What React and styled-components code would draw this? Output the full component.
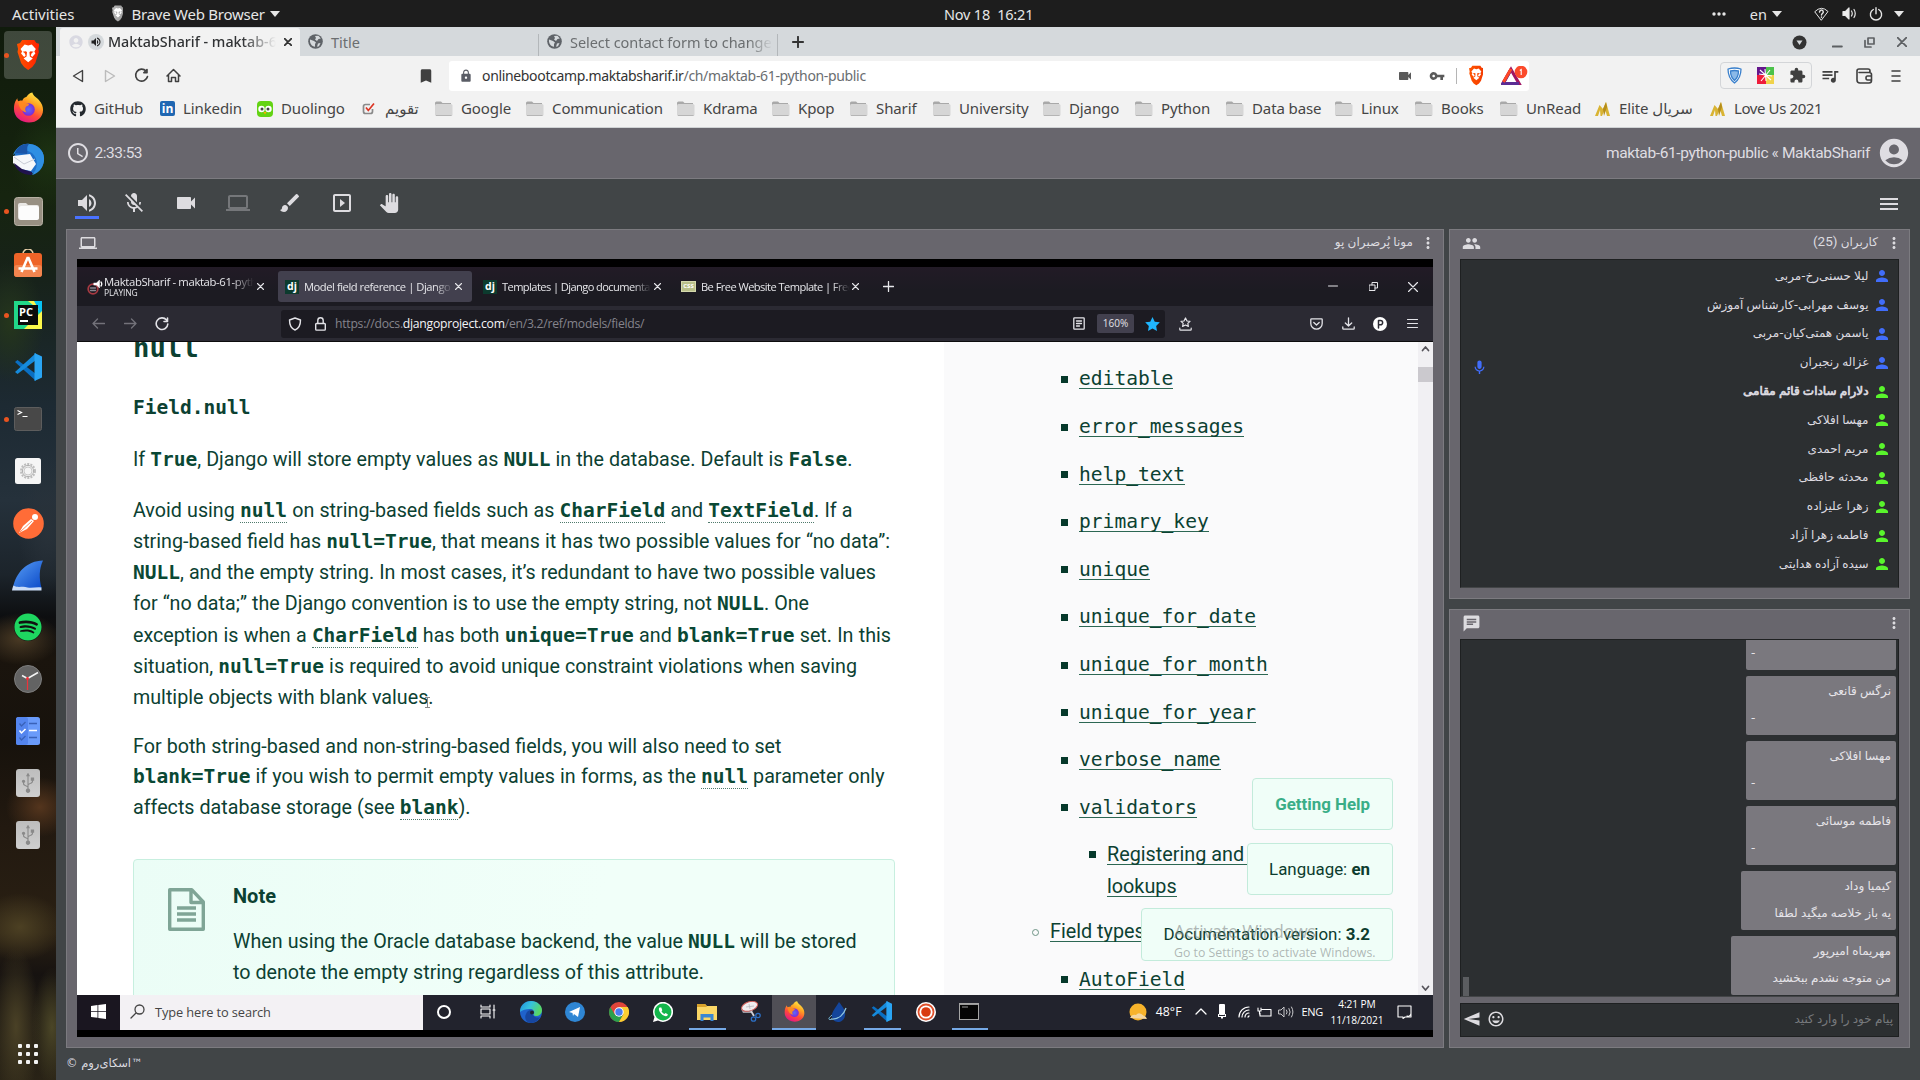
import React from 'react';
import styled, { createGlobalStyle, css } from 'styled-components';
import {
  MdVolumeUp, MdMicOff, MdVideocam, MdLaptop, MdBrush, MdSlideshow, MdPanTool, MdMenu, MdMoreVert,
  MdPeople, MdPerson, MdMic, MdChat, MdSend, MdInsertEmoticon, MdAccountCircle, MdAccessTime,
  MdLock, MdVpnKey, MdExtension, MdQueueMusic, MdBookmark,
} from 'react-icons/md';
import { FaGithub, FaSpotify, FaUsb } from 'react-icons/fa';

const Global = createGlobalStyle`
  * { box-sizing: border-box; }
  html, body { margin: 0; padding: 0; background: #414547; overflow: hidden; }
  svg { display: block; flex: none; }
`;

const ui = `"Noto Sans", "DejaVu Sans", sans-serif`;
const fa = `"Roboto", "DejaVu Sans", sans-serif`;
const mono = `"DejaVu Sans Mono", "Liberation Mono", monospace`;

const Screen = styled.div`
  width: 1920px; height: 1080px; display: flex; flex-direction: column; overflow: hidden;
  font-family: ${ui}; background: #414547;
`;

/* generic row pieces */
const Slot = styled.div`
  width: ${p => p.$w}px; margin-left: ${p => p.$ml || 0}px; flex: none; display: flex;
  align-items: center; justify-content: center; color: ${p => p.$c || 'inherit'};
`;
const Label = styled.span`
  margin-left: ${p => p.$ml || 0}px; width: ${p => (p.$w ? `${p.$w}px` : 'auto')}; flex: none;
  white-space: pre; overflow: ${p => (p.$fade ? 'hidden' : 'visible')};
  font-size: ${p => p.$s || 15}px; letter-spacing: ${p => p.$ls || 0}px;
  font-weight: ${p => p.$b || 400}; color: ${p => p.$c || 'inherit'};
  ${p => p.$fade && css`mask-image: linear-gradient(to right, #000 ${p.$fade}%, transparent 100%);`}
`;
const Grow = styled.div`flex: 1;`;

/* ---------- top bar ---------- */
const TopBar = styled.header`
  height: 27px; flex: none; background: #1d1d1d; color: #e6e6e6; display: flex; align-items: center;
  font-size: 15px;
`;
const TopLeft = styled.div`width: 944px; flex: none; display: flex; align-items: center;`;
const Caret = styled.i`
  width: 0; height: 0; border: 5px solid transparent; border-top: 6px solid #e6e6e6; border-bottom: 0;
  margin-left: ${p => p.$ml || 0}px; flex: none;
`;

/* ---------- dock ---------- */
const Body = styled.div`flex: 1; display: flex; min-height: 0;`;
const Dock = styled.nav`
  width: 56px; flex: none; padding-top: 2px; display: flex; flex-direction: column; align-items: center;
  background:
    radial-gradient(40px 50px at 50px 130px, #1c3212 0%, transparent 100%),
    radial-gradient(34px 60px at 10px 295px, #25361c 0%, transparent 100%),
    radial-gradient(30px 70px at 48px 500px, #29323a 0%, transparent 100%),
    radial-gradient(40px 26px at 20px 612px, #4a3a24 0%, transparent 100%),
    radial-gradient(34px 30px at 40px 780px, #54351d 0%, transparent 100%),
    radial-gradient(44px 34px at 20px 900px, #4c4023 0%, transparent 100%),
    radial-gradient(24px 80px at 16px 1000px, #4a4126 0%, transparent 100%),
    radial-gradient(20px 60px at 52px 1000px, #4b4627 0%, transparent 100%),
    linear-gradient(#101b0c 0, #16240f 16%, #17221a 24%, #1d2a33 36%, #25313b 45%, #1c242b 52%, #0d0e10 56%, #1a140d 60%, #17120c 68%, #221910 76%, #2a2013 86%, #161210 90%, #292316 100%);
`;
const DockItem = styled.div`
  width: 56px; height: 52px; flex: none; display: flex; align-items: center; position: relative;
  justify-content: center;
  &::before {
    content: ''; display: ${p => (p.$dot ? 'block' : 'none')}; position: absolute; left: 4px; top: 24px;
    width: 5px; height: 5px; border-radius: 50%; background: #e95420;
  }
`;
const DockTile = styled.div`
  width: 48px; height: 48px; border-radius: 4px; display: flex; align-items: center; justify-content: center;
  background: ${p => (p.$on ? 'rgba(255,255,255,.2)' : 'transparent')};
`;
const AppsButton = styled.div`
  margin-top: auto; margin-bottom: 16px; display: grid; grid-template-columns: repeat(3, 4px); gap: 4px;
  i { width: 4px; height: 4px; background: #f2f2f2; border-radius: 1px; }
`;

const BraveLion = ({ h = 32, a = '#ff5500', b = '#ff2000', f = '#fff' }) => (
  <svg width={h * 0.7} height={h} viewBox="0 0 22 32" preserveAspectRatio="none">
    <linearGradient id={'bl' + a.slice(1)}><stop offset="0" stopColor={a} /><stop offset="1" stopColor={b} /></linearGradient>
    <path d="M5 1h12l2 3 3 1-1 5 .5 3-3.500 11L15 28l-4 3-4-3-3-4L.5 13 1 10 0 5l3-1z" fill={`url(#bl${a.slice(1)})`} />
    <path d="M11 6.500l3.500-1 4 4.500-1.500 2.500 1 2-3 3.500-1.500-1.500 1-2.500 2-1.200-3-.6-1.300.8.4 4.500 2.900 2-4.500 3.800-4.500-3.800 2.900-2 .4-4.500-1.300-.8-3 .6 2 1.200 1 2.500L7 18 4 14.500l1-2L3.500 10l4-4.500z" fill={f} />
  </svg>
);
const Fox = ({ s = 32 }) => (
  <svg width={s} height={s} viewBox="0 0 32 32">
    <defs>
      <linearGradient id="fx" x1=".8" y1="0" x2=".3" y2="1">
        <stop offset="0" stopColor="#fff44f" /><stop offset=".35" stopColor="#ffa421" /><stop offset=".65" stopColor="#ff4b3a" /><stop offset="1" stopColor="#e31587" />
      </linearGradient>
      <radialGradient id="fg"><stop offset="0" stopColor="#5b6df8" /><stop offset="1" stopColor="#7a2bd9" /></radialGradient>
    </defs>
    <path d="M20 .5c1 4 4 4.500 6.500 7.500C30 12 31 15 31 18.500 31 26 24.500 31.500 16.500 31.500S1 26 1 17.500C1 12 2.500 9 4.500 6.500c0 2 .5 2.500 1.200 3C7 8.500 8 8.500 9.500 9 11 6 12.500 5.500 14 5c1.500-2.500 3-4 6-4.500z" fill="url(#fx)" />
    <circle cx="16" cy="18" r="6.500" fill="url(#fg)" />
    <path d="M5.500 10c4-1 6 0 7.500 1.500 2 0 3.500.5 3.500 1.500 0 1.500-3 1.500-3.500 3-1 2 0 4 1 5-5-.5-8-5-8.500-11z" fill="#ff8a1f" opacity=".95" />
  </svg>
);
const Thunderbird = () => (
  <svg width="34" height="34" viewBox="0 0 34 34">
    <circle cx="18" cy="17" r="15" fill="#1f6fc9" /><path d="M2 13C6 3 14 1 19 2c10 1 15 9 14 17-1 8-7 13-12 14 6-6 7-16 0-22C15 7 7 8 2 13z" fill="#2f8fe3" />
    <path d="M2 14l17-2 6 10-5 7-11-2L2 21z" fill="#f6f7fa" /><path d="M3 15l10 7 11-5" stroke="#c9ccd6" fill="none" />
    <path d="M3 21l8 6 10 3 0 3C12 33 5 29 3 21z" fill="#20124d" /><path d="M4 11C6 5 12 1 18 2c-3 3-1 6-2 10z" fill="#1a55a8" />
  </svg>
);
const Files = () => (
  <svg width="29" height="29" viewBox="0 0 29 29">
    <rect x=".5" y=".5" width="28" height="28" rx="3" fill="#989083" stroke="#b7b0a4" />
    <path d="M4 8a2 2 0 012-2h6l2 2h9a2 2 0 012 2v10a3 3 0 01-3 3H7a3 3 0 01-3-3z" fill="#e9e7e4" /><rect x="5" y="9" width="20" height="14" rx="2.500" fill="#fcfcfc" />
  </svg>
);
const Software = () => (
  <svg width="28" height="28" viewBox="0 0 28 28">
    <path d="M9 5a5 5 0 0110 0" fill="none" stroke="#e8cfa8" strokeWidth="1.600" />
    <rect y="4" width="28" height="24" rx="3" fill="#ee6428" /><rect y="16" width="28" height="12" rx="3" fill="#f3854f" />
    <path d="M7.500 23L13.500 9h1L20.500 23M4.500 19.500h19" stroke="#fff" strokeWidth="2.600" fill="none" />
  </svg>
);
const PyText = styled.span`
  position: absolute; left: 19px; top: 17px; color: #fff; font: 700 11px/12px "Open Sans", sans-serif;
  &::after { content: ''; display: block; width: 8px; height: 1.500px; margin-top: 2px; margin-left: 1px; background: #fff; }
`;
const Pycharm = () => (
  <>
    <svg width="28" height="28" viewBox="0 0 28 28">
      <rect width="28" height="28" fill="#21d789" /><path d="M16 0h12v14L18 6z" fill="#07c3f2" /><path d="M28 10v18H10z" fill="#fcf84a" /><path d="M14 0h6l5 9z" fill="#fcf84a" />
      <rect x="4" y="4" width="20" height="20" fill="#0b0b0b" />
    </svg>
    <PyText>PC</PyText>
  </>
);
const Code = ({ s = 28 }) => (
  <svg width={s} height={s} viewBox="0 0 28 28">
    <path d="M1 9l2.500-2L22 21v7z" fill="#0a6fc2" /><path d="M1 19l2.500 2L22 7V0z" fill="#168bdc" /><path d="M20.500 0L28 3.500v21L20.500 28z" fill="#2aa5f4" />
  </svg>
);
const Term = ({ w = 28, h = 24 }) => (
  <svg width={w} height={h} viewBox="0 0 28 24">
    <rect x=".5" y=".5" width="27" height="23" rx="2" fill="#484848" stroke="#5d5d5d" /><path d="M3.500 3.500l4 2-4 2M8.500 9.500h5" fill="none" stroke="#fff" strokeWidth="1.200" />
  </svg>
);
const Gear = () => (
  <svg width="26" height="26" viewBox="0 0 26 26">
    <rect width="26" height="26" rx="2.500" fill="#f5f5f5" /><circle cx="13" cy="13" r="7" fill="none" stroke="#bdbdbd" strokeWidth="2" strokeDasharray="2 1.200" /><circle cx="13" cy="13" r="5.600" fill="none" stroke="#b0b0b0" /><circle cx="13" cy="13" r="4" fill="none" stroke="#c9c9c9" />
  </svg>
);
const Postman = () => (
  <svg width="31" height="31" viewBox="0 0 31 31">
    <circle cx="15.500" cy="15.500" r="15.300" fill="#ff6c37" /><path d="M6 25l4-7 8-7 3 2-7 8z" fill="#fff" /><path d="M7 24l12-11" stroke="#ff6c37" strokeWidth=".8" /><circle cx="22" cy="9" r="3" fill="#fff" />
  </svg>
);
const Shark = () => (
  <svg width="32" height="31" viewBox="0 0 32 31">
    <linearGradient id="sh" x1="0" y1="0" x2="1" y2="1"><stop offset="0" stopColor="#5ba0f5" /><stop offset="1" stopColor="#0a49c8" /></linearGradient>
    <path d="M1 28C4 12 15 1 31 .5 27 9 27 18 29.500 28z" fill="url(#sh)" /><path d="M0 30.500c.5-3 1-4 1.500-5 5 3 9 0 14 2 5 1 9-1 14 0v3z" fill="#c9dcf7" />
  </svg>
);
const ClockApp = () => (
  <svg width="28" height="28" viewBox="0 0 28 28">
    <circle cx="14" cy="14" r="13.500" fill="#636363" stroke="#7d7d7d" /><path d="M13.500 13.500L24 7.500M13.500 13.500L8 10.500" stroke="#f4f4f4" strokeWidth="1.500" /><path d="M13.500 12v13" stroke="#ed333b" strokeWidth="1.200" /><circle cx="13.500" cy="13.500" r="1.500" fill="#ed333b" />
  </svg>
);
const Todo = () => (
  <svg width="24" height="28" viewBox="0 0 24 28">
    <rect width="24" height="28" rx="2.500" fill="#6a9bfa" /><rect width="12" height="28" rx="2.500" fill="#5485ee" />
    <path d="M3.500 6.500L5.500 9 9.500 5M3.500 20.500L5.500 23l4-4M13 6.500h8M13 20.500h8" stroke="#3a62b8" strokeWidth="1.300" fill="none" /><path d="M3.500 13.500l2 2.500 4-4M13 13.500h8" stroke="#fff" strokeWidth="1.500" fill="none" />
  </svg>
);
const UsbTile = styled.div`
  width: 24px; height: 28px; border-radius: 3px; background: linear-gradient(#bdbdbd, #cfcfcf); color: #8a8a8a;
  display: flex; align-items: center; justify-content: center; svg { transform: rotate(-90deg); }
`;
const SpotifyDisc = styled.div`
  width: 28px; height: 28px; border-radius: 50%; background: #111; color: #1ed760;
`;

/* ---------- browser ---------- */
const Browser = styled.div`flex: 1; display: flex; flex-direction: column; min-width: 0;`;
const TabStrip = styled.div`
  height: 29px; flex: none; background: #d5d9dc; padding: 1px 0 0 4px; display: flex; color: #6b6e70;
`;
const Tab = styled.div`
  width: ${p => p.$w}px; flex: none; display: flex; align-items: center; height: 28px; padding: 0 0 1px 8px;
  background: ${p => (p.$on ? '#f2f2f2' : 'transparent')}; border-radius: 3px 3px 0 0; position: relative;
  &::after { content: ''; display: ${p => (p.$sep ? 'block' : 'none')}; position: absolute; right: 0; top: 6px; bottom: 0; width: 1px; background: #b3b7ba; }
`;
const SpeakerDot = styled.div`
  width: 16px; height: 16px; border-radius: 50%; background: #d5d9dc; color: #222; display: flex;
  align-items: center; justify-content: center; flex: none; margin-left: 4px;
`;
const AddressRow = styled.div`
  height: 42px; flex: none; background: #f2f2f2; display: flex; align-items: center; color: #404040; padding-bottom: 3px;
`;
const AddressBox = styled.div`
  width: 1080px; height: 30px; background: #fff; border-radius: 3px; display: flex; align-items: center;
  margin-left: 14px; flex: none;
`;
const Divider = styled.i`width: 1px; height: 16px; background: #b5b5b5; margin-left: ${p => p.$ml}px;`;
const ExtBox = styled.div`
  width: 92px; height: 27px; margin-left: 191px; border: 1px solid #d3d5d8; border-radius: 4px; display: flex;
  align-items: center; flex: none;
`;
const BookmarkBar = styled.div`
  height: 30px; flex: none; background: #f2f2f2; display: flex; align-items: center; padding: 0 0 9px 14px;
  border-bottom: 1px solid #cfd2d4; color: #454545;
`;
const Bookmark = styled.div`
  width: ${p => p.$w}px; flex: none; display: flex; align-items: center; gap: ${p => p.$g ?? 8}px; white-space: nowrap; font-size: 15px;
  letter-spacing: ${p => p.$ls ?? -0.1}px; svg { position: relative; top: 1px; color: #24292e; }
`;
const Globe = () => (
  <svg width="15" height="15" viewBox="0 0 15 15"><circle cx="7.500" cy="7.500" r="7.300" fill="#5f6368" /><path d="M2 5.500l4 1.500 2 1.500-1 1.500 0 2.800C4 12.500 1.500 9.500 2 5.500zM7 2l3.500-.2 2.300 2.700-2.300.5-1.500 2L7 5.500 8 4zM10 9.500l2.500-.5-1.500 3.200-2 .6z" fill="#d5d9dc" /></svg>
);
const Folder = () => (
  <svg width="18" height="16" viewBox="0 0 18 16"><path d="M0 2a1.500 1.500 0 011.500-1.500h4.500L7.500 2H16v4H0z" fill="#a9a9a9" /><rect x="0" y="3" width="17.500" height="12" rx="1.500" fill="#d6d6d6" /><path d="M1 14.500h15.500" stroke="#b5b5b5" /></svg>
);
const LinkedIn = styled.span`
  width: 15px; height: 15px; background: #2067b2; border-radius: 2px; color: #fff; flex: none;
  font: 700 12px/15px "Open Sans", sans-serif; text-align: center; letter-spacing: 0;
`;
const Owl = () => (
  <svg width="16" height="16" viewBox="0 0 16 16"><rect width="16" height="16" rx="4" fill="#63d313" /><circle cx="4.500" cy="8" r="3.200" fill="#fff" /><circle cx="11.500" cy="8" r="3.200" fill="#fff" /><circle cx="5" cy="8" r="1.500" fill="#444" /><circle cx="11" cy="8" r="1.500" fill="#444" /><path d="M6.500 11h3L8 13.500z" fill="#ffae00" /></svg>
);
const Check = () => (
  <svg width="16" height="14" viewBox="0 0 16 14"><path d="M9 2.500H4.500Q2.500 2.500 2.500 4.500v5q0 2 2 2h5q2 0 2-2V7" fill="none" stroke="#8a8a8a" strokeWidth="1.700" /><path d="M5 5.500l2.300 3L13 1.500" fill="none" stroke="#dc3524" strokeWidth="1.700" /></svg>
);
const GoldM = () => (
  <svg width="17" height="14" viewBox="0 0 17 14"><path d="M0 14L4.500 3 8 7l3-7 4 14h-3l-2-7-3 7H5.500L5 8 3 14z" fill="#d9b433" /><path d="M8 7l3-7 1 5-3 9z" fill="#b58d1b" /></svg>
);

/* ---------- meeting page ---------- */
const Page = styled.main`flex: 1; display: flex; flex-direction: column; background: #414547; min-height: 0;`;
const MeetHead = styled.div`
  height: 51px; flex: none; background: #68666d; border-bottom: 1px solid #7c7b80; display: flex; align-items: center;
  color: #dfdde2; font-family: ${fa}; padding: 0 12.500px 0 11.500px;
`;
const MeetTools = styled.div`height: 50px; flex: none; display: flex; align-items: center; color: #dddce0; padding-left: 19px;`;
const ToolButton = styled.div`
  width: 24px; height: 28px; margin-left: ${p => p.$ml || 0}px; margin-top: 1px; flex: none; color: ${p => (p.$dim ? '#75777a' : '#dddce0')};
  border-bottom: 3px solid ${p => (p.$on ? '#4a72ff' : 'transparent')}; display: flex; justify-content: center; align-items: center;
`;
const Columns = styled.div`display: flex; gap: 5px; padding-left: 10px; height: 819px; flex: none;`;
const Side = styled.div`display: flex; flex-direction: column; gap: 10px; width: 461px;`;
const Panel = styled.section`
  width: ${p => p.$w}px; height: ${p => p.$h}px; background: #68666d; border: 1px solid #7c7b80; padding: 0 10px 10px;
  display: flex; flex-direction: column; flex: none;
`;
const PanelHead = styled.div`
  height: 29px; flex: none; display: flex; align-items: center; color: #dddce0; font: 13px ${fa}; padding-bottom: 3px; margin-right: -4px;
`;
const PersianTitle = styled.span`
  direction: rtl; font: 12px/16px "DejaVu Sans", sans-serif; white-space: nowrap; margin-top: -3px; word-spacing: -.6px;
  bdi { font: 13.500px ${fa}; letter-spacing: -.3px; }
`;
const Dark = styled.div`
  background: #2c2f31; border: 1px solid #1e2021; border-bottom-color: #434547; flex: 1; min-height: 0; overflow: hidden; position: relative;
`;
const UserList = styled.div`padding-top: 2px;`;
const UserRow = styled.div`
  direction: rtl; height: 28.800px; display: flex; align-items: center; padding-right: 7px; gap: 4.500px;
  color: #dddbe0; font: 12px "DejaVu Sans", sans-serif; word-spacing: -.6px;
  svg { color: ${p => (p.$host ? '#416dfa' : '#59f52c')}; }
  span { display: block; line-height: 20px; margin-top: -1px; white-space: nowrap; -webkit-text-stroke: ${p => (p.$b ? '.7px #dddbe0' : '0')}; }
`;
const MicBadge = styled.div`position: absolute; left: 9.500px; top: 99px; color: #416dfa;`;
const ChatList = styled.div`
  height: 100%; display: flex; flex-direction: column; justify-content: flex-end; gap: 6px; align-items: flex-end; padding: 0 2px 1px 0;
`;
const Bubble = styled.div`
  width: ${p => p.$w}px; height: 59px; flex: none; background: #7a787e; border-radius: 2px; padding: 2px 5px; direction: rtl;
  color: #e6e4e9; font: 12px/26px "DejaVu Sans", sans-serif; white-space: nowrap; word-spacing: -.6px;
  p { margin: 0; height: 26.500px; text-align: ${p => (p.$dash ? 'left' : 'right')}; }
  p:first-child { text-align: right; }
`;
const ChatThumb = styled.i`position: absolute; left: 2px; bottom: 0; width: 6px; height: 19px; background: #5b5d60;`;
const ChatInput = styled.div`
  height: 34px; margin-top: 6px; flex: none; background: #2c2f31; border: 1px solid #1e2021; display: flex; align-items: center;
  color: #dddce0; padding: 0 5px 2px 1px;
`;
const Placeholder = styled.span`color: #77797c; font: 12px "DejaVu Sans", sans-serif; direction: rtl; word-spacing: -.6px;`;
const Flip = styled.span`transform: scaleX(-1);`;
const Footer = styled.footer`
  padding-left: 10px; padding-top: 4px; display: flex; color: #dddce0; font: 11.500px/22px "DejaVu Sans", sans-serif;
  span { direction: rtl; }
`;

/* ---------- shared screen ---------- */
const Video = styled.div`flex: 1; background: #000; padding: 8px 0 7px; display: flex; flex-direction: column; min-height: 0; width: 1356px;`;
const FxTabs = styled.div`
  height: 39px; flex: none; background: linear-gradient(#221b26, #1c1b22 60%); display: flex; align-items: center; color: #e6e6ea;
  font-family: "Open Sans", ${ui}; padding-left: 10px;
`;
const FxTab = styled.div`
  width: ${p => p.$w}px; height: 31px; border-radius: 3px; background: ${p => (p.$on ? '#42404e' : 'transparent')};
  display: flex; align-items: center; padding-left: ${p => p.$pl}px; flex: none;
`;
const TwoLine = styled.div`
  display: flex; flex-direction: column; width: 150px; font-size: 11.300px; letter-spacing: -.36px; line-height: 12px; margin-left: 1px; white-space: nowrap; overflow: hidden;
  mask-image: linear-gradient(to right, #000 85%, transparent 100%);
  small { font-size: 8.500px; line-height: 10px; letter-spacing: -.15px; }
`;
const Dj = styled.span`
  width: 14px; height: 14px; background: #0c3b2e; color: #fff; font: 700 10.500px/13px "Open Sans", sans-serif; text-align: center; flex: none;
`;
const CssChip = styled.span`
  width: 15px; height: 11px; background: #b9c08a; border: 1px solid #d5d9ad; color: #fff; font: 700 6px/9px "Open Sans", sans-serif; text-align: center; flex: none;
`;
const FxBar = styled.div`height: 36px; flex: none; background: #2b2a33; border-bottom: 1px solid #0c0c0d; display: flex; align-items: center; color: #e3e3e8; font-family: "Open Sans", ${ui};`;
const FxUrl = styled.div`width: 884px; height: 28px; margin-left: 112px; background: #1c1b22; border-radius: 3px; display: flex; align-items: center; flex: none;`;
const Zoom = styled.span`width: 37px; height: 19px; background: #42404e; border-radius: 2px; font-size: 10px; line-height: 19px; text-align: center; margin-left: 12px;`;
const Doc = styled.div`height: 653px; flex: none; display: flex; background: #fff; overflow: hidden; position: relative; color: #0c4132; font: 20px/31px Roboto, sans-serif;`;
const Article = styled.div`width: 867px; flex: none; padding-left: 56px;`;
const H2 = styled.h2`margin: -9.500px 0 0; font: 700 27.300px/30px ${mono};`;
const H3 = styled.h3`margin: 29.600px 0 0; font: 700 19.500px/31px ${mono};`;
const P = styled.div`margin-top: ${p => p.$mt}px; --lh: ${p => p.$lh || 31.130}px;`;
const Line = styled.div`
  width: ${p => p.$w}px; height: var(--lh); line-height: var(--lh); white-space: nowrap; text-align: justify; text-align-last: justify;
  font-size: 19.700px;
`;
const C = styled.code`
  font: 700 19.500px/1 ${mono}; color: #0a4834; border-bottom: ${p => (p.$u ? '1px dotted #4f7a6c' : '0')};
`;
const Note = styled.div`
  margin-top: 35.900px; width: 762px; height: 200px; border: 1px solid #c7efdf; border-radius: 4px; background: linear-gradient(100deg, #ebfdf6, #f1fff9 60%);
  display: flex; --lh: 31.300px; flex: none;
  > svg { margin: 27.500px 0 0 34px; }
`;
const NoteText = styled.div`margin: 21px 0 0 28px; b { display: block; font-size: 20px; line-height: 31px; margin-bottom: 14px; }`;
const Toc = styled.div`width: 474px; flex: none; background: #fafafb; padding-top: 13.700px;`;
const TocItem = styled.div`
  height: ${p => p.$h || 47.600}px; margin-top: ${p => p.$mt || 0}px; padding-left: ${p => p.$x}px; display: flex; align-items: center; white-space: pre;
  font: ${p => (p.$t ? '19.800px Roboto, sans-serif' : `19.600px ${mono}`)};
  span { border-bottom: 1px solid #2c6753; line-height: 20px; height: 20px; }
`;
const Bullet = styled.i`
  width: 7px; height: 7px; margin-left: -18px; margin-right: 11px; flex: none;
  background: ${p => (p.$o ? 'transparent' : '#06392b')}; border: ${p => (p.$o ? '1px solid #6d9485' : '0')}; border-radius: ${p => (p.$o ? '50%' : 0)};
`;
const Scroll = styled.div`
  width: 15px; background: #f1f0f3; display: flex; flex-direction: column; align-items: center; padding: 3px 0; justify-content: space-between; position: relative; color: #55535a;
  &::before { content: ''; position: absolute; top: 25px; left: 0; width: 15px; height: 15px; background: #cbc9ce; }
`;
const Floats = styled.div`position: absolute; right: 40px; top: 435.500px; display: flex; flex-direction: column; gap: 12.800px; align-items: flex-end;`;
const FloatBtn = styled.div`
  height: 52.500px; width: ${p => p.$w}px; border: 1px solid #c3ebdb; border-radius: 4px; background: #f0fef8; line-height: 51px; font-size: 16.900px;
  text-align: right; padding-right: 22px; color: ${p => p.$c || '#0c3c2e'}; white-space: nowrap;
`;
const Activate = styled.div`
  position: absolute; left: 1097px; top: 577px; color: rgba(130,135,135,.6); font: 17.300px/25px "Open Sans", sans-serif; white-space: nowrap;
  small { display: block; font-size: 12.300px; line-height: 17px; }
`;
const IBeam = styled.i`position: absolute; left: 348px; top: 355px; width: 5px; height: 11px; border: solid #888; border-width: 1px 0; &::after { content: ''; display: block; margin: 0 auto; width: 1px; height: 9px; background: #888; }`;
const Taskbar = styled.div`height: 35px; flex: none; background: #22232d; display: flex; color: #fff; font-family: "Open Sans", ${ui}; > * { padding-bottom: 2px; }`;
const Start = styled.div`width: 43px; display: flex; align-items: center; justify-content: center; background: #1a1620;`;
const Search = styled.div`width: 303px; background: #f3f1f4; display: flex; align-items: center; color: #444; padding-left: 10px; margin-right: -1px;`;
const TaskBtn = styled.div`
  width: 43.800px; height: 35px; flex: none; display: flex; align-items: center; justify-content: center;
  background: ${p => (p.$hi ? '#504f56' : 'transparent')}; position: relative;
  &::after { content: ''; display: ${p => (p.$run ? 'block' : 'none')}; position: absolute; bottom: 0; left: ${p => (p.$hi ? 0 : 4)}px; right: ${p => (p.$hi ? 0 : 3)}px; height: 2px; background: #76a9e6; }
`;
const TrayText = styled.span`
  align-self: center; margin-left: ${p => p.$ml}px; font-size: ${p => p.$s}px; letter-spacing: ${p => p.$ls || 0}px;
`;
const Stamp = styled.div`width: 56px; margin-left: 6px; margin-right: 1px; font-size: 10.200px; line-height: 16px; text-align: center; padding-top: 1px; white-space: nowrap; letter-spacing: -.1px;`;

const S = ({ w = 16, h = w, vb, d, sw = 1.3, children, fill = 'none' }) => (
  <svg width={w} height={h} viewBox={vb || `0 0 ${w} ${h}`} fill={fill} stroke={fill === 'none' ? 'currentColor' : 'none'} strokeWidth={sw} strokeLinecap="round" strokeLinejoin="round">
    {d && <path d={d} />}{children}
  </svg>
);
const X = ({ s = 7, w = 1.1 }) => <S w={s} d={`M.5.5l${s - 1} ${s - 1}M${s - .5}.5l-${s - 1} ${s - 1}`} sw={w} />;

const users = [
  ['لیلا حسنی‌رخ-مربی', 1], ['یوسف مهرابی-کارشناس آموزش', 1], ['یاسمن همتی‌کیان-مربی', 1], ['غزاله رنجبران', 1],
  ['دلارام سادات قائم مقامی', 0, 1], ['مهسا افلاکی'], ['مریم احمدی'], ['محدثه حافظی'], ['زهرا علیزاده'], ['فاطمه زهرا آزاد'], ['سیده آزاده هدایتی'],
];
const chats = [
  ['', '-', 150], ['نرگس قانعی', '-', 150], ['مهسا افلاکی', '-', 150], ['فاطمه موسائی', '-', 150],
  ['کیمیا وداد', 'یه باز خلاصه میگید لطفا', 155], ['مهریماه امیرپور', 'من متوجه نشدم ببخشید', 165],
];
const folders = [['Google', 91], ['Communication', 151], ['Kdrama', 95], ['Kpop', 78], ['Sharif', 83], ['University', 110], ['Django', 92], ['Python', 91], ['Data base', 109], ['Linux', 80], ['Books', 85], ['UnRead', 95]];
const toc = ['editable', 'error_messages', 'help_text', 'primary_key', 'unique', 'unique_for_date', 'unique_for_month', 'unique_for_year', 'verbose_name', 'validators'];

const dock = [
  [<BraveLion />, 1, 1], [<Fox s={31} />], [<Thunderbird />], [<Files />, 1], [<Software />], [<Pycharm />, 1], [<Code />], [<Term />, 1], [<Gear />], [<Postman />], [<Shark />],
  [<SpotifyDisc><FaSpotify size={28} /></SpotifyDisc>], [<ClockApp />], [<Todo />],
  [<UsbTile><FaUsb size={20} /></UsbTile>], [<UsbTile><FaUsb size={20} /></UsbTile>],
];

const Edge = () => (
  <svg width="22" height="22" viewBox="0 0 22 22">
    <linearGradient id="eg" x1="0" y1="0" x2="1" y2=".4"><stop offset="0" stopColor="#1f8fe0" /><stop offset=".5" stopColor="#36c1dd" /><stop offset="1" stopColor="#58d765" /></linearGradient>
    <circle cx="11" cy="11" r="11" fill="#1f62cc" /><path d="M0 11C0 4 5 0 11 0s11 4 11 9c0 4-3 6-6 6-2 0-3-1-2-2 1-3-1-5-4-5-4 0-8 1-10 3z" fill="url(#eg)" /><path d="M13 14c2 3 5 3 7 2-2 4-6 6-10 6-4-1-6-5-4-9 1-3 3-4 5-4-1 1-1 3 2 5z" fill="#1746a0" /><circle cx="12" cy="11.500" r="2" fill="#22232d" />
  </svg>
);
const Chrome = () => (
  <svg width="20" height="20" viewBox="0 0 20 20">
    <circle cx="10" cy="10" r="10" fill="#e0453a" /><path d="M1.340 5A10 10 0 0010 20l4.300-7.500H10L5.700 12.500z" fill="#2aa04c" /><path d="M10 20A10 10 0 0018.700 5H10l4.300 7.500z" fill="#fbce32" /><circle cx="10" cy="10" r="4.700" fill="#fff" /><circle cx="10" cy="10" r="3.700" fill="#4a7df0" />
  </svg>
);
const apps = [
  [<S w={16} sw={2}><circle cx="8" cy="8" r="6" /></S>],
  [<S w={16} h={15} sw={1.1} d="M1 1v2h9V1M1 14v-2h9v2M1 5h9v5H1zM14 1v13M13 6h2" />],
  [<Edge />],
  [<svg width="20" height="20" viewBox="0 0 20 20"><circle cx="10" cy="10" r="10" fill="#2f86d4" /><path d="M4 10l11-5-2 10-4-3-1 2-.5-3z" fill="#fff" /></svg>],
  [<Chrome />],
  [<svg width="20" height="20" viewBox="0 0 20 20"><path d="M0 20l1.500-5A10 10 0 1115 18.500 10 10 0 015 18.600z" fill="#fff" /><circle cx="10" cy="10" r="8.500" fill="#14b64c" /><path d="M6.500 5.500c-1.500 1.500 0 4.500 2 6.500s5 3 6 1.500l.3-1.300-2.300-1.200-1 1c-1.500-.5-2.500-1.700-3-2.800l.8-1L8.300 5.500z" fill="#fff" /></svg>],
  [<svg width="20" height="18" viewBox="0 0 20 18"><path d="M0 1h8l2 2h10v14H0z" fill="#fbd766" /><path d="M0 1h8l2 3H0z" fill="#d9a22b" /><path d="M3.500 18v-7h13v7h-3v-3.500h-7V18z" fill="#3b87d2" /></svg>, 1],
  [<svg width="21" height="21" viewBox="0 0 21 21"><path d="M1 8l2 4h8l5-7z" fill="#9c9aa2" /><ellipse cx="9.500" cy="5.500" rx="8.300" ry="4.500" transform="rotate(-18 9 5)" fill="#f0edef" stroke="#cf5a55" /><path d="M9 3l1 5M6 6l8-1" stroke="#b9b6bd" strokeWidth=".8" /><path d="M11 10l3 5" stroke="#d0d0d6" strokeWidth="1.800" /><circle cx="13.500" cy="18" r="2.200" stroke="#2c6fc4" strokeWidth="1.300" fill="none" /><circle cx="18" cy="14.500" r="2.200" stroke="#2c6fc4" strokeWidth="1.300" fill="none" /></svg>],
  [<Fox s={21} />, 1, 1],
  [<svg width="20" height="22" viewBox="0 0 20 22"><path d="M11 1c4 5 7 9 6 14-1 4-4 6-7 6-4 0-7-4-6-8 1-4 4-7 7-12z" fill="#14459b" /><path d="M3 18c8 1 13-5 15-11" stroke="#8ec4e0" strokeWidth="1.300" fill="none" /><path d="M4 14c-5 4-3 5-1 4.500" stroke="#74b6d9" fill="none" /></svg>],
  [<Code s={21} />, 1],
  [<svg width="20" height="20" viewBox="0 0 20 20"><circle cx="10" cy="10" r="10" fill="#fff" /><circle cx="10" cy="10" r="7.500" fill="none" stroke="#e0512c" strokeWidth="1.800" /><circle cx="10" cy="10" r="4.800" fill="#d93a10" /></svg>],
  [<svg width="20" height="17" viewBox="0 0 20 17"><rect x=".5" y=".5" width="19" height="16" fill="#050505" stroke="#a5a5a5" /><path d="M1 1.500h18M3 4h6" stroke="#999" /></svg>, 1],
];

const Dots = () => <S w={14} h={4} fill="#e6e6e6"><circle cx="2" cy="2" r="1.700" /><circle cx="7" cy="2" r="1.700" /><circle cx="12" cy="2" r="1.700" /></S>;

function Shared() {
  return (
    <Video>
      <FxTabs>
        <FxTab $w={191} $pl={0}>
          <S w={16} h={17}><circle cx="6" cy="11" r="4.800" stroke="#a83a42" strokeWidth="1.800" /><path d="M3.500 10h5M3.500 12.500h5" stroke="#8b8790" /><path d="M7 5h2.500l3-3v8l-3-3H7z" fill="#fff" stroke="#fff" strokeWidth=".5" /><path d="M14 4q1.500 2 0 4" stroke="#fff" /></S>
          <TwoLine>MaktabSharif - maktab-61-python<small>PLAYING</small></TwoLine>
          <Slot $w={10} $ml={1}><X /></Slot>
        </FxTab>
        <FxTab $w={194} $pl={7} $on><Dj>dj</Dj><Label $ml={5} $s={11.2} $ls={-0.46} $w={149} $fade={88}>Model field reference | Django documentation</Label><Slot $w={10} $ml={0}><X /></Slot></FxTab>
        <FxTab $w={197} $pl={11}><Dj>dj</Dj><Label $ml={5} $s={11.1} $ls={-0.58} $w={149} $fade={88}>Templates | Django documentation</Label><Slot $w={10} $ml={1}><X /></Slot></FxTab>
        <FxTab $w={202} $pl={12}><CssChip>CSS</CssChip><Label $ml={5} $s={11.1} $ls={-0.55} $w={149} $fade={88}>Be Free Website Template | Free CSS</Label><Slot $w={10} $ml={0}><X /></Slot></FxTab>
        <Slot $w={12} $ml={11}><S w={11} d="M5.500.5v10M.5 5.500h10" sw={1.3} /></Slot>
        <Grow />
        <Slot $w={12}><S w={10} h={4} d="M.5 1h9" sw={1} /></Slot>
        <Slot $w={12} $ml={28}><S w={9} d="M.5 3h5.500v5.500H.5zM3 3V.5h5.500V6H6" sw={1} /></Slot>
        <Slot $w={12} $ml={28}><X s={10} w={1.2} /></Slot>
        <Slot $w={14} />
      </FxTabs>
      <FxBar>
        <Slot $w={14} $ml={14} $c="#73727a"><S w={13} h={11} d="M12.500 5.500H1M5.500 1L1 5.500 5.500 10" /></Slot>
        <Slot $w={14} $ml={18} $c="#73727a"><S w={13} h={11} d="M.5 5.500H12M7.500 1L12 5.500 7.500 10" /></Slot>
        <Slot $w={14} $ml={18}><S w={14} sw={1.6} d="M11.500 3A5.800 5.800 0 1012.800 7M12.500 1v3.500H9" /></Slot>
        <FxUrl>
          <Slot $w={14} $ml={7}><S w={14} d="M7 1L12.500 3C12.500 8 11 11.500 7 13 3 11.500 1.500 8 1.500 3z" sw={1.4} /></Slot>
          <Slot $w={12} $ml={12}><S w={11} h={14} d="M1.500 6.500h8q.8 0 .8.8v5q0 .8-.8.8h-8q-.8 0-.8-.8v-5q0-.8.8-.8zM2.800 6V3.500a2.700 2.700 0 015.400 0V6" sw={1.4} /></Slot>
          <Label $ml={9} $s={12.2} $ls={-0.26} $c="#85848c">https://docs.<Label as="span" $s={12.2} $ls={-0.26} $c="#f4f4f6">djangoproject.com</Label>/en/3.2/ref/models/fields/</Label>
          <Grow />
          <Slot $w={12}><S w={12} h={13} d="M1.500.8h9q.7 0 .7.7v10q0 .7-.7.7h-9q-.7 0-.7-.7v-10q0-.7.7-.7zM3.500 4h5M3.500 6.500h5M3.500 9h3" /></Slot>
          <Zoom>160%</Zoom>
          <Slot $w={16} $ml={10}><svg width="15" height="14" viewBox="0 0 24 23"><path d="M12 0l3.700 7.600 8.300 1.200-6 5.900 1.400 8.300L12 19l-7.400 4L6 14.700 0 8.800l8.300-1.200z" fill="#1fb6ff" /></svg></Slot>
          <Slot $w={5} />
        </FxUrl>
        <Slot $w={14} $ml={13}><S w={13} h={14} d="M6.500 1l1.500 3 3 .4-2.200 2 .6 3-2.900-1.400-2.900 1.400.6-3L2 4.400 5 4zM.8 11v1.500q0 .7.7.7h10q.7 0 .7-.7V11" sw={1.2} /></Slot>
        <Grow />
        <Slot $w={14}><S w={13} h={12} d="M1.500.8h10q.7 0 .7.7v4a5.700 5.700 0 01-11.400 0v-4q0-.7.7-.7zM3.800 4.500L6.500 7l2.700-2.500" /></Slot>
        <Slot $w={14} $ml={18}><S w={13} h={13} d="M6.500.8v8M3.300 6l3.200 3L9.700 6M.8 10v1.500q0 .7.7.7h10q.7 0 .7-.7V10" /></Slot>
        <Slot $w={14} $ml={18}><S w={14} fill="#fff"><circle cx="7" cy="7" r="7" /><path d="M5.500 11V3.500h2a2 2 0 010 4.300h-2" fill="none" stroke="#2b2a33" strokeWidth="1.500" /></S></Slot>
        <Slot $w={14} $ml={18}><S w={11} h={9} d="M.5.5h10M.5 4.500h10M.5 8.500h10" sw={1.1} /></Slot>
        <Slot $w={14} />
      </FxBar>
      <Doc>
        <Article>
          <H2>null</H2>
          <H3>Field.null</H3>
          <P $mt={20.8}><Line $w={719.5}>If <C>True</C>, Django will store empty values as <C>NULL</C> in the database. Default is <C>False</C>.</Line></P>
          <P $mt={20}>
            <Line $w={719.5}>Avoid using <C $u>null</C> on string-based fields such as <C $u>CharField</C> and <C $u>TextField</C>. If a</Line>
            <Line $w={757}>string-based field has <C>null=True</C>, that means it has two possible values for “no data”:</Line>
            <Line $w={743}><C>NULL</C>, and the empty string. In most cases, it’s redundant to have two possible values</Line>
            <Line $w={676}>for “no data;” the Django convention is to use the empty string, not <C>NULL</C>. One</Line>
            <Line $w={758}>exception is when a <C $u>CharField</C> has both <C>unique=True</C> and <C>blank=True</C> set. In this</Line>
            <Line $w={724}>situation, <C>null=True</C> is required to avoid unique constraint violations when saving</Line>
            <Line $w={300.5}>multiple objects with blank values.</Line>
          </P>
          <P $mt={18.8} $lh={30.5}>
            <Line $w={648.5}>For both string-based and non-string-based fields, you will also need to set</Line>
            <Line $w={751.5}><C>blank=True</C> if you wish to permit empty values in forms, as the <C $u>null</C> parameter only</Line>
            <Line $w={337.5}>affects database storage (see <C $u>blank</C>).</Line>
          </P>
          <Note>
            <svg width="37" height="43" viewBox="0 0 37 43" fill="none" stroke="#7fa596" strokeWidth="3.400" strokeLinejoin="round"><path d="M1.700 1.700h22L35.300 14v27.300H1.700zM23 2v12.500h12" /><path d="M9 20h19M9 26h19M9 32h19" /></svg>
            <NoteText><b>Note</b><Line $w={623.5}>When using the Oracle database backend, the value <C>NULL</C> will be stored</Line><Line $w={471}>to denote the empty string regardless of this attribute.</Line></NoteText>
          </Note>
        </Article>
        <Toc>
          {toc.map(t => <TocItem key={t} $x={135}><Bullet /><span>{t}</span></TocItem>)}
          <TocItem $x={163} $t $h={31.7} $mt={7.3}><Bullet /><span>Registering and </span></TocItem>
          <TocItem $x={163} $t $h={31.7} $mt={0.4}><span>lookups</span></TocItem>
          <TocItem $x={106} $t $h={47} $mt={6.2}><Bullet $o /><span>Field types</span></TocItem>
          <TocItem $x={135}><Bullet /><span>AutoField</span></TocItem>
        </Toc>
        <Scroll><S w={9} h={7} d="M1.500 5.500l3-3.500 3 3.500" sw={1.700} /><S w={9} h={7} d="M1.500 1.500l3 3.500 3-3.500" sw={1.700} /></Scroll>
        <Floats>
          <FloatBtn $w={141} $c="#3aae87"><b>Getting Help</b></FloatBtn>
          <FloatBtn $w={146}>Language: <b>en</b></FloatBtn>
          <FloatBtn $w={252}>Documentation version: <b>3.2</b></FloatBtn>
        </Floats>
        <Activate>Activate Windows<small>Go to Settings to activate Windows.</small></Activate>
        <IBeam />
      </Doc>
      <Taskbar>
        <Start><svg width="15" height="15" viewBox="0 0 15 15" fill="#fff"><path d="M0 2l6.500-1v6H0zM7.300.9L15 0v7H7.300zM0 7.800h6.500v6L0 13zM7.300 7.800H15V15l-7.700-1z" /></svg></Start>
        <Search><S w={15} h={15} sw={1.3}><circle cx="9.500" cy="5.500" r="4.500" /><path d="M6 9l-5 5" /></S><Label $ml={10} $s={12.8} $ls={-0.1}>Type here to search</Label></Search>
        {apps.map((a, i) => <TaskBtn key={i} $run={a[1]} $hi={a[2]}>{a[0]}</TaskBtn>)}
        <Grow />
        <Slot $w={20}><svg width="20" height="18" viewBox="0 0 20 18"><circle cx="10" cy="9" r="8.500" fill="#f7b32b" /><path d="M2 15q2-4 6-3 3-4 8 1 2 0 3 3z" fill="#f4d6a0" /></svg></Slot>
        <TrayText $ml={8} $s={12.3}>48°F</TrayText>
        <Slot $w={14} $ml={12}><S w={12} h={7} d="M1 6l5-5 5 5" /></Slot>
        <Slot $w={14} $ml={7}><S w={10} h={15} fill="#fff"><rect x="2" y="0" width="6" height="11" rx="1" /><path d="M1 10h1v2h6v-2h1v3H6v1.500H4V13H1z" /></S></Slot>
        <Slot $w={14} $ml={8}><S w={12} h={12} sw={1.2} d="M1 11A10 10 0 0111 1M4 11a7 7 0 017-7M7 11a4 4 0 014-4M10 11l1-1" /></Slot>
        <Slot $w={16} $ml={6}><S w={15} h={10} sw={1.1} d="M5 2.500h9v6.500H3V6M1 1v3h3V1M2.500 4v3" /></Slot>
        <Slot $w={16} $ml={5} $c="#c9c9cc"><S w={16} h={12} sw={1} d="M1 4h2l3-3v10L3 8H1zM8.500 4q1.500 2 0 4M11 2.500q2.500 3.500 0 7M13.500 1q3 5 0 10" /></Slot>
        <TrayText $ml={8} $s={11} $ls={-0.3}>ENG</TrayText>
        <Stamp>4:21 PM<br />11/18/2021</Stamp>
        <Slot $w={16} $ml={10}><S w={15} h={14} d="M1 1h13v11H8l-2 1.500V12H1zM14 8a3 3 0 01-4 3" sw={1.1} /></Slot>
        <Slot $w={21} />
      </Taskbar>
    </Video>
  );
}

export default function App() {
  return (
    <Screen>
      <Global />
      <TopBar>
        <TopLeft>
          <Label $ml={12}>Activities</Label>
          <Slot $w={16} $ml={35}><BraveLion h={17} a="#b9b9b9" b="#9a9a9a" f="#fff" /></Slot>
          <Label $ml={6} $ls={-0.25}>Brave Web Browser</Label><Caret $ml={5} />
        </TopLeft>
        <Label $s={14.5} $ls={-0.2}>Nov 18  16:21</Label>
        <Grow />
        <Slot $w={14}><Dots /></Slot>
        <Label $ml={24} $s={14.5}>en</Label><Caret $ml={5} />
        <Slot $w={16} $ml={31}><S w={15} h={14} d="M1 4.500Q7.500-2 14 4.500L7.500 13z" sw={1}><path d="M5.500 5Q6 3 7.500 3T9.300 5C9.300 6.500 7.500 6.500 7.500 8M7.500 10v.3" strokeWidth="1.500" /></S></Slot>
        <Slot $w={16} $ml={12}><S w={15} h={13} d="M9.500 4q1.500 2.500 0 5M12 2.500q2.500 4 0 8" sw={1.2}><path d="M1 4.500h2.500L7 1v11L3.500 8.500H1z" fill="#eee" /></S></Slot>
        <Slot $w={14} $ml={12}><S w={14} d="M4.300 2.500a5.600 5.600 0 105.400 0M7 .8v6" sw={1.4} /></Slot>
        <Caret $ml={11} /><Slot $w={16} />
      </TopBar>
      <Body>
        <Dock>
          {dock.map((d, i) => <DockItem key={i} $dot={d[1]}><DockTile $on={d[2]}>{d[0]}</DockTile></DockItem>)}
          <AppsButton>{Array.from({ length: 9 }, (_, i) => <i key={i} />)}</AppsButton>
        </Dock>
        <Browser>
          <TabStrip>
            <Tab $w={240} $on>
              <Slot $w={16} $c="#d9d9e2"><MdAccountCircle size={16} /></Slot>
              <SpeakerDot><MdVolumeUp size={12} /></SpeakerDot>
              <Label $ml={4} $s={14.3} $b={500} $w={168} $fade={80} $c="#303234">MaktabSharif - maktab-61-python</Label>
              <Slot $w={12} $ml={6} $c="#333"><X s={8} w={1.8} /></Slot>
            </Tab>
            <Tab $w={239} $sep><Globe /><Label $ml={8} $s={14.5}>Title</Label></Tab>
            <Tab $w={239} $sep><Globe /><Label $ml={8} $s={14.5} $ls={-0.05} $w={203} $fade={88}>Select contact form to change</Label></Tab>
            <Slot $w={12} $ml={14} $c="#333"><S w={12} d="M6 .8v10.400M.8 6h10.400" sw={1.900} /></Slot>
            <Grow />
            <Slot $w={16} $c="#333"><svg width="15" height="15" viewBox="0 0 15 15"><circle cx="7.500" cy="7.500" r="7" fill="#333" /><path d="M4.500 5.500h6l-3 4.500z" fill="#d5d9dc" /></svg></Slot>
            <Slot $w={12} $ml={24} $c="#5d6063"><S w={11} h={12} d="M.8 10.500h9" sw={2} /></Slot>
            <Slot $w={12} $ml={20} $c="#5d6063"><S w={11} h={11} d="M4 1h6v6H4zM1 3.500V10h6" sw={1.700} /></Slot>
            <Slot $w={12} $ml={21} $c="#5d6063"><X s={10} w={1.8} /></Slot><Slot $w={12} />
          </TabStrip>
          <AddressRow>
            <Slot $w={14} $ml={15}><S w={12} h={14} d="M10.500 1.500v11L1.500 7z" sw={1.4} /></Slot>
            <Slot $w={14} $ml={18} $c="#bbb"><S w={12} h={14} d="M1.500 1.500v11L10.500 7z" sw={1.400} /></Slot>
            <Slot $w={16} $ml={16}><S w={15} h={15} d="M12 3A6 6 0 1013.500 8.500M13 1.500v3.200H9.800z" sw={1.600} /></Slot>
            <Slot $w={16} $ml={16}><S w={15} h={15} d="M1 8l6.500-6.500L14 8M2.500 7v6.500h3V9.500h4v4h3V7" sw={1.500} /></Slot>
            <Slot $w={18} $ml={236}><MdBookmark size={18} /></Slot>
            <AddressBox>
              <Slot $w={14} $ml={10} $c="#5a5d66"><MdLock size={14} /></Slot>
              <Label $ml={9} $s={14} $c="#6a6d70" $ls={-0.34}><Label as="span" $s={14} $c="#333" $ls={-0.34}>onlinebootcamp.maktabsharif.ir</Label>/ch/maktab-61-python-public</Label>
              <Grow />
              <Slot $w={16} $c="#5a5a5a"><MdVideocam size={16} /></Slot><Slot $w={16} $ml={16} $c="#5a5a5a"><MdVpnKey size={16} /></Slot>
              <Divider $ml={11} />
              <Slot $w={16} $ml={11}><BraveLion h={21} a="#ff5501" b="#f33a00" /></Slot>
              <Slot $w={28} $ml={17}><svg width="28" height="20" viewBox="0 0 28 20"><path d="M10 3.500l8 14H2z" fill="none" stroke="#a01563" strokeWidth="3.200" /><path d="M10 3.500L2 17.500h16" fill="none" stroke="#5b2d94" strokeWidth="3.200" /><path d="M10 3L2.500 16" stroke="#ff4724" strokeWidth="3" /><circle cx="20" cy="6" r="6.300" fill="#fb4a2b" /><path d="M18.800 4.500l1.400-1v5.500" stroke="#fff" fill="none" strokeWidth="1.100" /></svg></Slot>
            </AddressBox>
            <ExtBox>
              <Slot $w={16} $ml={5}><S w={15} h={17} sw={1.3}><path d="M1 2q6.500-2 13 0Q14 11 7.500 16 1 11 1 2z" stroke="#3a80cc" fill="#fff" /><path d="M3.500 4q4-1 8 0 0 6-4 9.500Q3.500 10 3.500 4z" stroke="#3a80cc" fill="#8ab9e8" /></S></Slot>
              <Slot $w={17} $ml={15}><svg width="17" height="17" viewBox="0 0 17 17"><path d="M0 0h9v8H0z" fill="#64178c" /><path d="M9 0h8v8H9z" fill="#4cc24b" /><path d="M0 8h9v9H0z" fill="#ee1c3b" /><path d="M9 8h8v9H9z" fill="#f0d24a" /><path d="M3 3l11 10M13 3L4 14M8 2l1 12M2 7l13 2" stroke="#fff" strokeWidth="1.100" /></svg></Slot>
              <Slot $w={17} $ml={15}><MdExtension size={17} /></Slot>
            </ExtBox>
            <Slot $w={20} $ml={8}><MdQueueMusic size={20} /></Slot>
            <Slot $w={18} $ml={15}><S w={17} h={16} sw={1.6} d="M14 4.500V3q0-2-2-2H3Q1 1 1 3v9q0 3 3 3h9q2.500 0 2.500-2.500v-6Q15.500 4.500 13 4.500H3M15.500 8h-4q-1.500 0-1.500 2t1.500 2h4" /></Slot>
            <Slot $w={12} $ml={17}><S w={10} h={12} d="M1 1h8M1 6h8M1 11h8" sw={1.500} /></Slot>
          </AddressRow>
          <BookmarkBar>
            <Bookmark $w={90}><FaGithub size={16} />GitHub</Bookmark>
            <Bookmark $w={97} $g={8}><LinkedIn>in</LinkedIn>Linkedin</Bookmark>
            <Bookmark $w={104}><Owl />Duolingo</Bookmark>
            <Bookmark $w={74}><Check />تقویم</Bookmark>
            {folders.map(([t, w]) => <Bookmark key={t} $w={w}><Folder />{t}</Bookmark>)}
            <Bookmark $w={115} $g={7}><GoldM />Elite سریال</Bookmark>
            <Bookmark $w={115} $g={7} $ls={-0.4}><GoldM />Love Us 2021</Bookmark>
          </BookmarkBar>
          <Page>
            <MeetHead>
              <Slot $w={20}><MdAccessTime size={24} /></Slot>
              <Label $ml={7} $s={15.500} $ls={-0.5}>2:33:53</Label>
              <Grow />
              <Label $s={15.500} $ls={-0.38}>maktab-61-python-public « MaktabSharif</Label>
              <Slot $w={28} $ml={9.5}><MdAccountCircle size={34} /></Slot>
            </MeetHead>
            <MeetTools>
              <ToolButton $on><MdVolumeUp size={24} /></ToolButton>
              <ToolButton $ml={23}><MdMicOff size={24} /></ToolButton>
              <ToolButton $ml={28}><MdVideocam size={24} /></ToolButton>
              <ToolButton $ml={28} $dim><MdLaptop size={24} /></ToolButton>
              <ToolButton $ml={28}><MdBrush size={24} /></ToolButton>
              <ToolButton $ml={28}><MdSlideshow size={24} /></ToolButton>
              <ToolButton $ml={23}><MdPanTool size={20} /></ToolButton>
              <Grow />
              <Slot $w={24}><MdMenu size={24} /></Slot><Slot $w={19} />
            </MeetTools>
            <Columns>
              <Panel $w={1378} $h={819}>
                <PanelHead><Slot $w={18} $ml={2}><MdLaptop size={18} /></Slot><Grow /><PersianTitle>مونا پُرصبران پو</PersianTitle><Slot $w={18} $ml={6}><MdMoreVert size={18} /></Slot></PanelHead>
                <Shared />
              </Panel>
              <Side>
                <Panel $w={461} $h={370}>
                  <PanelHead><Slot $w={20} $ml={1}><MdPeople size={19} /></Slot><Grow /><PersianTitle>کاربران <bdi>(25)</bdi></PersianTitle><Slot $w={18} $ml={7}><MdMoreVert size={18} /></Slot></PanelHead>
                  <Dark>
                    <UserList>{users.map(u => <UserRow key={u[0]} $host={u[1]} $b={u[2]}><MdPerson size={18} /><span>{u[0]}</span></UserRow>)}</UserList>
                    <MicBadge><MdMic size={17} /></MicBadge>
                  </Dark>
                </Panel>
                <Panel $w={461} $h={439}>
                  <PanelHead><Slot $w={20} $ml={1}><MdChat size={19} /></Slot><Grow /><Slot $w={18}><MdMoreVert size={18} /></Slot></PanelHead>
                  <Dark>
                    <ChatList>{chats.map((c, i) => <Bubble key={i} $w={c[2]} $dash={c[1] === '-'}><p>{c[0]}</p><p>{c[1]}</p></Bubble>)}</ChatList>
                    <ChatThumb />
                  </Dark>
                  <ChatInput><Slot $w={18} $ml={1}><Flip><MdSend size={18} /></Flip></Slot><Slot $w={18} $ml={6}><MdInsertEmoticon size={18} /></Slot><Grow /><Placeholder>پیام خود را وارد کنید</Placeholder></ChatInput>
                </Panel>
              </Side>
            </Columns>
            <Footer><span>™اسکای‌روم ©</span></Footer>
          </Page>
        </Browser>
      </Body>
    </Screen>
  );
}
